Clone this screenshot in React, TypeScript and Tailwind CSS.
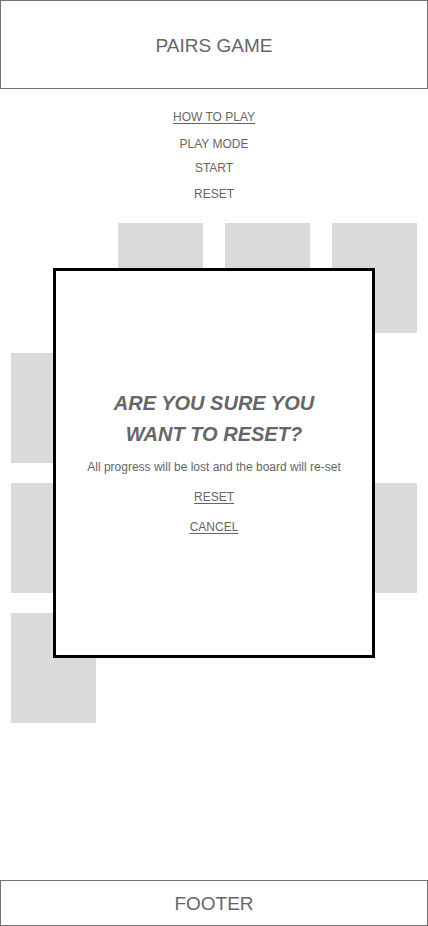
import React from "react";

// which cells of the 4x4 board hold a card
const board: boolean[] = [
    false, true, true, true,
    true, true, true, false,
    true, true, true, true,
    true, false, false, false,
]

const App: React.FC = () => {
    return (
        <div
        className="relative flex flex-col h-[926px] w-full bg-white text-[#666] font-['Liberation_Sans',Arial,sans-serif]">
            <header
            className="h-[89px] border border-[#707070] flex items-center justify-center pt-[4px] text-[19px]">
                PAIRS GAME
            </header>

            <nav
            className="flex flex-col items-center text-[12px] leading-4 pt-[20px]">
                <a className="underline underline-offset-2">HOW TO PLAY</a>
                <span className="mt-[11px]">PLAY MODE</span>
                <span className="mt-[8px]">START</span>
                <span className="mt-[10px]">RESET</span>
            </nav>

            <main
            className="flex-1 px-[11px] pt-[21px]">
                <div
                className="grid grid-cols-[repeat(4,85px)] justify-between gap-y-5">
                    {board.map((filled, i) => (
                        <div
                        key={i}
                        className={`h-[110px] ${filled ? 'bg-[#dadada]' : 'bg-transparent'}`}></div>
                    ))}
                </div>
            </main>

            <footer
            className="h-[46px] border border-[#707070] flex items-center justify-center pt-[3px] text-[19px]">
                FOOTER
            </footer>

            <div
            className="absolute left-[53px] top-[268px] w-[322px] h-[390px] border-[3px] border-black bg-white flex flex-col items-center justify-center pb-[3px] text-center">
                <h2
                className="text-[20px] leading-[31px] font-bold italic">
                    ARE YOU SURE YOU<br />WANT TO RESET?
                </h2>
                <p className="text-[12px] leading-4 mt-[9px]">All progress will be lost and the board will re-set</p>
                <a className="text-[12px] leading-4 mt-[14px] underline underline-offset-2">RESET</a>
                <a className="text-[12px] leading-4 mt-[14px] underline underline-offset-2">CANCEL</a>
            </div>
        </div>
    )
}

export default App
